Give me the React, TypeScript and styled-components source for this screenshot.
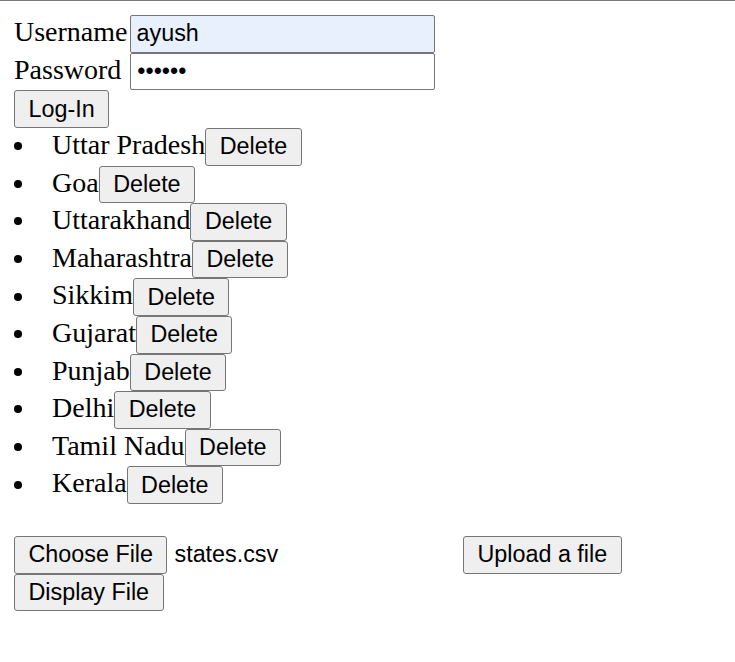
import React from "react";
import styled, { createGlobalStyle } from "styled-components";

const GlobalStyle = createGlobalStyle`
  html {
    border-top: 1px solid #7a7a7a;
    background: #ffffff;
  }
  body {
    margin: 14px;
    font-family: "Liberation Serif", "Times New Roman", serif;
    font-size: 28px;
    color: #000000;
  }
`;

const Form = styled.form`
  margin: 0;
`;

const Row = styled.div`
  display: block;
  height: 37.7px;
`;

const Label = styled.label`
  font-family: "Liberation Serif", "Times New Roman", serif;
  font-size: 28px;
`;

const TextInput = styled.input<{ $autofill?: boolean }>`
  box-sizing: border-box;
  width: 305px;
  height: 37.5px;
  margin: 0 0 0 2px;
  padding: 4px 6px;
  border: 1px solid #767676;
  border-radius: 2px;
  background: ${(p) => (p.$autofill ? "#e8f0fe" : "#ffffff")};
  font-family: "Liberation Sans", Arial, sans-serif;
  font-size: 23.33px;
  color: #000000;
  outline: none;
`;

const Button = styled.button`
  box-sizing: border-box;
  height: 37.6px;
  margin: 0;
  padding: 1.75px 13.5px;
  border: 1px solid #767676;
  border-radius: 3px;
  background: #efefef;
  font-family: "Liberation Sans", Arial, sans-serif;
  font-size: 23.33px;
  color: #000000;
  cursor: default;
`;

const StateList = styled.ul`
  margin: 0 0 32px 0;
  padding: 0;
  list-style: none;
`;

const StateItem = styled.li`
  height: 37.6px;
  &::before {
    content: "";
    display: inline-block;
    width: 8px;
    height: 8px;
    margin-right: 30px;
    border-radius: 50%;
    background: #000000;
    vertical-align: 4px;
  }
`;

const FileRow = styled.div`
  display: block;
  height: 37.7px;
`;

const FilePicker = styled.span`
  display: inline-block;
  width: 442px;
  font-family: "Liberation Sans", Arial, sans-serif;
  font-size: 23.33px;
`;

const FileName = styled.span`
  margin-left: 7px;
`;

const states = [
  "Uttar Pradesh",
  "Goa",
  "Uttarakhand",
  "Maharashtra",
  "Sikkim",
  "Gujarat",
  "Punjab",
  "Delhi",
  "Tamil Nadu",
  "Kerala",
];

export default function App() {
  return (
    <>
      <GlobalStyle />
      <Form onSubmit={(e) => e.preventDefault()}>
        <Row>
          <Label>Username</Label>
          <TextInput type="text" defaultValue="ayush" $autofill readOnly />
        </Row>
        <Row>
          <Label>Password </Label>
          <TextInput type="password" defaultValue="123456" readOnly />
        </Row>
        <Button type="button">Log-In</Button>
      </Form>
      <StateList>
        {states.map((s) => (
          <StateItem key={s}>
            {s}
            <Button type="button">Delete</Button>
          </StateItem>
        ))}
      </StateList>
      <FileRow>
        <FilePicker>
          <Button type="button">Choose File</Button>
          <FileName>states.csv</FileName>
        </FilePicker>{" "}
        <Button type="button">Upload a file</Button>
      </FileRow>
      <Button type="button">Display File</Button>
    </>
  );
}
